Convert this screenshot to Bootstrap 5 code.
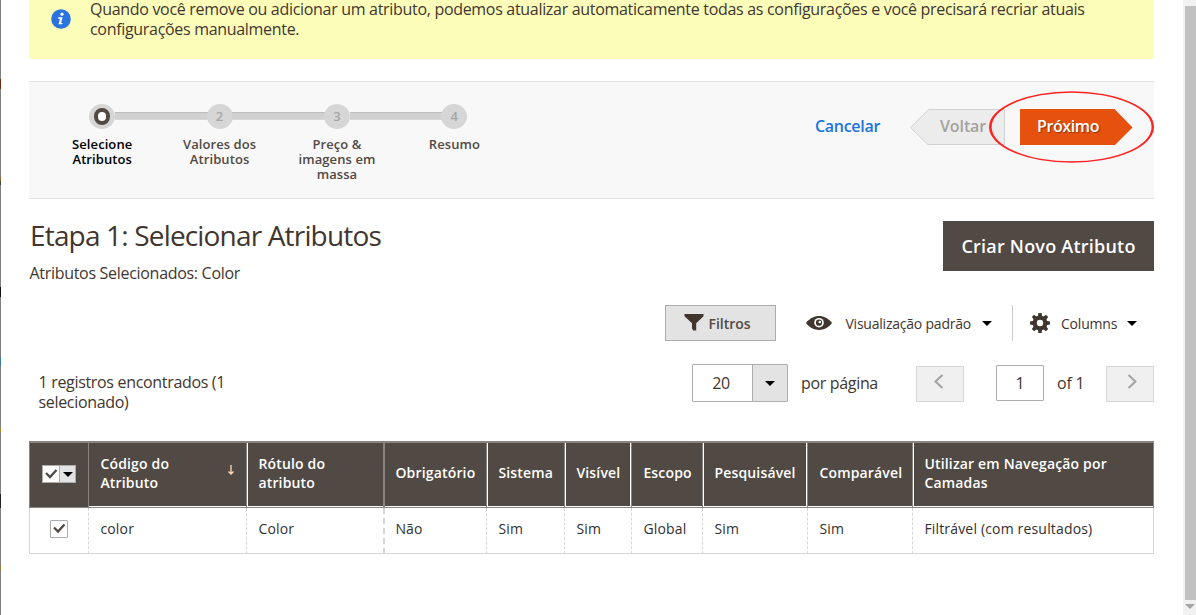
<!DOCTYPE html>
<html lang="pt-BR">
<head>
<meta charset="utf-8">
<meta name="viewport" content="width=device-width, initial-scale=1">
<title>Etapa 1: Selecionar Atributos</title>
<link href="https://cdn.jsdelivr.net/npm/bootstrap@5.3.0/dist/css/bootstrap.min.css" rel="stylesheet">
<style>
html,body{height:615px;overflow:hidden}
body{font-family:"Open Sans","Noto Sans",sans-serif;font-size:16px;line-height:20px;color:#41362f;background:#fff}
.edge{width:1px;background:linear-gradient(#808080 79px,#6b2b10 79px 89px,#808080 89px 177px,#8a6a30 177px 181px,#444 181px 185px,#808080 185px 287px,#111 287px 297px,#808080 297px 357px,#3f7ba5 357px 366px,#808080 366px 428px,#b08030 428px 432px,#808080 432px 494px,#222 494px 508px,#808080 508px 566px,#b08030 566px 570px,#808080 570px)}
.page-body{width:1125px;margin-left:28px}

.notice{height:59px;background:#fdfdba;padding-left:61px}
.notice svg{left:22px;top:9px}
.ntext{white-space:nowrap;letter-spacing:-.308px;margin-top:-1px}

.wizard{height:118px;margin-top:22px;background:#f8f8f8;border:solid #e3e3e3;border-width:1px 0;padding-left:14.5px}
.steps{padding-top:22px}
.step{width:117.4px;font-size:13px;line-height:15px;font-weight:600;color:#514943;text-align:center;letter-spacing:.08px}
.step+.step::before{content:"";position:absolute;top:8px;left:-46px;width:94px;height:8px;background:#d1d1d1;border-top:1px solid #bdbdbd;border-bottom:1px solid #d8d8d8}
.dot{width:26px;height:25px;margin:0 auto 8px;border-radius:50%;background:#d6d6d6;color:#a6a6a6;line-height:25px}
.ring{width:16px;height:17px;border:4px solid #514943;border-radius:8px;background:#fff}
.wiz-actions{padding-top:27px;height:63px}
.cancel{color:#2073dc;text-decoration:none}
.arrow-btn{height:36px;line-height:34px;font-weight:600;letter-spacing:-.3px}
.back{width:95px;margin-left:30px;padding-left:30px;color:#a5a29f;letter-spacing:-.1px}
.next{width:113px;margin:0 21px 0 15px;padding-left:17px;color:#fff;letter-spacing:-.4px;text-shadow:1px 1px 1px rgba(60,20,0,.5)}
.mark-ring{left:959px;top:8px}

.titles{margin-top:22px;height:64px}
.heading{font-size:28px;line-height:36px;font-weight:400;letter-spacing:-.83px;margin-top:-4px;padding-left:1px}
.sub{margin-top:10px;letter-spacing:-.3px;padding-left:.5px}
.create{width:211px;height:50px;background:#514943;color:#fff;border:0;border-radius:0;font-size:18px;font-weight:600;letter-spacing:.22px;padding:0}

.tools{height:36px;margin-top:20px;font-size:14px}
.filter{width:111px;background:#e3e3e3;border:1px solid #adadad;font-weight:600;color:#514943;padding-left:18px}
.ftext{margin:1px 0 0 4px}
.eye{margin-left:30px}
.view{margin:2px 0 0 13px;letter-spacing:-.22px}
.c1{margin:1px 0 0 11px}
.cols{border-left:1px solid #ccc;margin-left:20px;padding-left:17px;width:142px}
.ctext{margin:2px 0 0 11px;letter-spacing:-.2px}
.c2{margin:1px 0 0 10px}
.caret{width:0;height:0;border:5px solid transparent;border-top:5px solid #000;border-bottom:0}

.pager{margin-top:23px;height:38px}
.records{width:663px;padding:8px 0 0 9.5px;letter-spacing:-.32px}
.perpage{width:96px;height:38px;border:1px solid #adadad;border-radius:1px}
.num{width:59px;text-align:center;line-height:36px;letter-spacing:-.3px;padding-right:3px}
.perpage .dd{width:35px;background:#e3e3e3;border-left:1px solid #adadad}
.por{width:128px;padding:9px 0 0 13px;letter-spacing:-.33px}
.box{border:1px solid #adadad;border-radius:1px;height:36px;width:48px;line-height:34px;text-align:center}
.pg{background:#f0f0f0;border-color:#d6d6d6;border-radius:0}
.prev,.nextp{margin-top:2px;padding-top:7px}
.prev{padding-right:2px}
.nextp{padding-left:4px}
.cur{margin-left:32px;margin-top:1px}
.of{width:62px;padding:9px 0 0 13px;letter-spacing:-.2px}

.grid-table{width:1125px;table-layout:fixed;border-collapse:separate;border-spacing:0;font-size:14px;line-height:19px;margin-top:39px;letter-spacing:.17px}
.grid-table th{height:67px;background:#514943;color:#fff;font-weight:600;border-top:2px solid #8a8582;border-left:1px solid #8a837f;border-bottom:1px solid #8a837f;padding:0 0 4px 11.4px;vertical-align:middle;box-shadow:inset 0 -1px #fff}
.grid-table td{height:46px;border-left:1px dashed #d6d6d6;border-bottom:1px solid #d6d6d6;padding:0 0 5px 11.4px;vertical-align:middle;color:#303030}
.grid-table th.one{padding-bottom:6px}
.grid-table th.wl{box-shadow:inset 1px 0 #fff,inset 0 -1px #fff}
.grid-table th.wlr{box-shadow:inset 1px 0 #fff,inset -1px 0 #fff,inset 0 -1px #fff}
.grid-table .thick{border-left-width:2px;padding-left:10.4px}
.grid-table th:first-child{box-shadow:none;padding:0 0 2px 12px}
.grid-table td:first-child{border-left-style:solid;padding:0 0 3px 20px}
.grid-table th:last-child{border-right:1px solid #8a837f}
.grid-table td:last-child{border-right:1px solid #d6d6d6}
.multi{width:34px;height:18px;border:1px solid #adadad;background:#fff}
.multi .dd{width:16px;background:#e3e3e3;border-left:1px solid #adadad}
.tick{width:18px;height:18px;border:1px solid #adadad;border-radius:1px}
.sort{margin:-7px 12px 0 auto}

.scroll-track{width:13px;background:#f1f1f1}
.thumb{height:594px;margin:6px 0 0 2px;background:#c1c1c1}
.scroll-track .caret{border-top-color:#a3a3a3}
</style>
</head>
<body class="d-flex">
<div class="edge flex-shrink-0"></div>
<main class="page-body flex-shrink-0">
  <div class="notice position-relative d-flex">
    <svg class="position-absolute" width="20" height="20" viewBox="0 0 20 20"><circle cx="10" cy="10" r="9.8" fill="#2b73df"/><circle cx="11" cy="5.2" r="1.6" fill="#fff"/><path d="M7.3 8.3h4.3l-1.5 5.6h1.5l-.4 1.300H7.500l1.500-5.500H7z" fill="#fff"/></svg>
    <div class="ntext">Quando você remove ou adicionar um atributo, podemos atualizar automaticamente todas as configurações e você precisará recriar atuais<br>configurações manualmente.</div>
  </div>
  <div class="wizard d-flex position-relative">
    <div class="steps d-flex">
      <div class="step position-relative text-black"><div class="dot position-relative z-1 d-flex align-items-center justify-content-center"><div class="ring"></div></div>Selecione<br>Atributos</div>
      <div class="step position-relative"><div class="dot position-relative">2</div>Valores dos<br>Atributos</div>
      <div class="step position-relative"><div class="dot position-relative">3</div>Preço &amp;<br>imagens em<br>massa</div>
      <div class="step position-relative"><div class="dot position-relative">4</div>Resumo</div>
    </div>
    <div class="wiz-actions d-flex ms-auto">
      <a href="#" class="cancel arrow-btn">Cancelar</a>
      <div class="back arrow-btn position-relative"><svg class="position-absolute top-0 start-0" width="95" height="37"><path d="M94.500.500H18.500L.500 18.500l18 17.500M18.500 35.500h76V.500" fill="#ececec" stroke="#d0d0d0"/><path d="M18.500 1L1.200 18.500l17.300 16.500z" fill="#ececec"/></svg><span class="position-relative">Voltar</span></div>
      <div class="next arrow-btn position-relative"><svg class="position-absolute top-0 start-0" width="113" height="37"><path d="M0 0h94.500l18 18.500-18 18V36H0z" fill="#e6520e"/></svg><span class="position-relative">Próximo</span></div>
    </div>
    <svg class="mark-ring position-absolute" width="168" height="74" viewBox="0 0 168 74"><path fill="#f22" fill-rule="evenodd" d="M1 37a82.500 35.700 0 0 1 165 0a82.500 35.700 0 0 1-165 0zM3.600 37a80 34.300 0 0 0 160 0a80 34.300 0 0 0-160 0z"/></svg>
  </div>
  <div class="d-flex justify-content-between titles">
    <div><h1 class="heading mb-0">Etapa 1: Selecionar Atributos</h1><div class="sub">Atributos Selecionados: Color</div></div>
    <button class="create btn">Criar Novo Atributo</button>
  </div>
  <div class="tools d-flex align-items-center">
    <div class="filter h-100 d-flex align-items-center ms-auto"><svg width="20" height="18"><path d="M.5 0h19v2.200l-7.300 7v7.300H9.300L8 14.500V9.200L.5 2.200z" fill="#41362f"/></svg><span class="ftext">Filtros</span></div>
    <svg class="eye" width="26" height="14" viewBox="0 0 26 14"><path d="M0 7C7-2.300 19-2.300 26 7C19 16.300 7 16.300 0 7z" fill="#41362f"/><circle cx="13" cy="6.700" r="4.800" fill="#fff"/><circle cx="13" cy="6.700" r="3.100" fill="#41362f"/><circle cx="13.800" cy="6" r="1.300" fill="#fff"/></svg>
    <span class="view">Visualização padrão</span><i class="caret c1"></i>
    <div class="cols h-100 d-flex align-items-center"><svg class="gear" width="20" height="20" viewBox="-10 -10 20 20"><g fill="#41362f"><path id="t" d="M-2.200-6L-1.600-10H1.600L2.200-6V6L1.600 10H-1.600L-2.200 6z"/><use href="#t" transform="rotate(45)"/><use href="#t" transform="rotate(90)"/><use href="#t" transform="rotate(135)"/><circle r="7.400"/></g><circle r="3.200" fill="#fff"/></svg><span class="ctext">Columns</span><i class="caret c2"></i></div>
  </div>
  <div class="pager d-flex">
    <div class="records">1 registros encontrados (1<br>selecionado)</div>
    <div class="perpage d-flex"><span class="num">20</span><span class="dd d-flex align-items-center justify-content-center"><i class="caret"></i></span></div>
    <span class="por">por página</span>
    <div class="box pg prev"><svg class="d-block mx-auto" width="10" height="15"><path d="M8.500 1L1.500 7.500l7 6.500" stroke="#a5a3a1" stroke-width="2" fill="none"/></svg></div>
    <div class="box cur">1</div><span class="of">of 1</span>
    <div class="box pg nextp"><svg class="d-block mx-auto" width="10" height="15"><path d="M1.500 1l7 6.500-7 6.500" stroke="#a5a3a1" stroke-width="2" fill="none"/></svg></div>
  </div>
  <table class="grid-table">
    <colgroup><col style="width:59px"><col style="width:158px"><col style="width:137px"><col style="width:103px"><col style="width:78px"><col style="width:67px"><col style="width:71px"><col style="width:105px"><col style="width:105px"><col style="width:242px"></colgroup>
    <thead><tr>
      <th><div class="multi d-flex"><svg width="16" height="16"><path d="M3 7l4 4 6.500-7" fill="none" stroke="#514943" stroke-width="2.300"/></svg><span class="dd d-flex align-items-center justify-content-center"><i class="caret"></i></span></div></th>
      <th><div class="d-flex align-items-center">Código do<br>Atributo<svg class="sort" width="6" height="10"><path d="M3 0v9M.5 6.500L3 9l2.500-2.500" stroke="#ffd9b8" stroke-width="1.300" fill="none"/></svg></div></th>
      <th class="wl">Rótulo do<br>atributo</th><th class="thick one">Obrigatório</th><th class="wl one">Sistema</th><th class="wlr one">Visível</th><th class="one">Escopo</th><th class="wlr one">Pesquisável</th><th class="one">Comparável</th><th class="wl">Utilizar em Navegação por<br>Camadas</th>
    </tr></thead>
    <tbody><tr>
      <td><div class="tick"><svg class="d-block" width="16" height="16"><path d="M3 6.500l4 4 6.500-7" fill="none" stroke="#514943" stroke-width="2.300"/></svg></div></td>
      <td>color</td><td>Color</td><td class="thick">Não</td><td>Sim</td><td>Sim</td><td>Global</td><td>Sim</td><td>Sim</td><td>Filtrável (com resultados)</td>
    </tr></tbody>
  </table>
</main>
<div class="scroll-track ms-auto flex-shrink-0"><div class="thumb"></div><i class="caret d-block mx-auto mt-1"></i></div>
</body>
</html>
